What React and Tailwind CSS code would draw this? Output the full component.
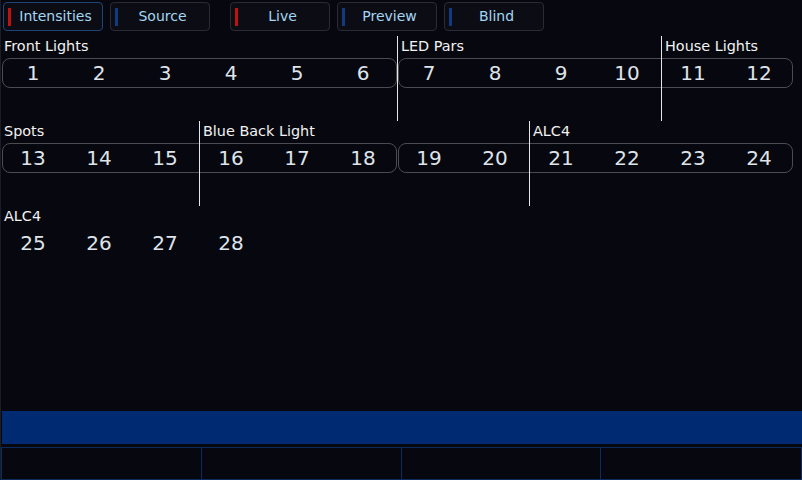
const tabs = [
  { label: 'Intensities', bar: 'bg-[#c01010]', active: true },
  { label: 'Source', bar: 'bg-[#123a80]' },
  { label: 'Live', bar: 'bg-[#c01010]', gap: true },
  { label: 'Preview', bar: 'bg-[#123a80]' },
  { label: 'Blind', bar: 'bg-[#123a80]' },
];

// each row: groups (label, start col, span) and pages (start col, span) with channels
const rows = [
  {
    groups: [
      { name: 'Front Lights', start: 1, span: 6, line: false },
      { name: 'LED Pars', start: 7, span: 4, line: true },
      { name: 'House Lights', start: 11, span: 2, line: true },
    ],
    boxes: [1, 7],
    channels: [1, 2, 3, 4, 5, 6, 7, 8, 9, 10, 11, 12],
  },
  {
    groups: [
      { name: 'Spots', start: 1, span: 3, line: false },
      { name: 'Blue Back Light', start: 4, span: 5, line: true },
      { name: 'ALC4', start: 9, span: 4, line: true },
    ],
    boxes: [1, 7],
    channels: [13, 14, 15, 16, 17, 18, 19, 20, 21, 22, 23, 24],
  },
  {
    groups: [{ name: 'ALC4', start: 1, span: 4, line: false }],
    boxes: [],
    channels: [25, 26, 27, 28],
  },
];

function ChannelRow({ row }) {
  return (
    <div className="grid grid-cols-[repeat(12,66px)] grid-rows-[22px_30px_33px]">
      {row.boxes.map((b) => (
        <div
          key={'b' + b}
          style={{ gridColumn: `${b} / span 6`, gridRow: '2 / 3' }}
          className="ml-[2px] mr-[-1px] rounded-[8px] border border-[#4b4b50]"
        />
      ))}
      {row.channels.map((c, i) => (
        <div
          key={c}
          style={{ gridColumn: `${i + 1} / span 1`, gridRow: '2 / 3' }}
          className="flex items-center justify-center text-[20px] leading-none text-[#dfe3ea]"
        >
          {c}
        </div>
      ))}
      {row.groups.map((g) => (
        <div
          key={g.name + g.start}
          style={{ gridColumn: `${g.start} / span ${g.span}`, gridRow: '1 / 4' }}
          className={`pointer-events-none ${g.line ? 'border-l border-[#e6e6e6] pl-[3px] ml-[1px]' : 'pl-[4px]'}`}
        >
          <div className="text-[14.4px] leading-[20px] text-[#f2f2f2] whitespace-nowrap">{g.name}</div>
        </div>
      ))}
    </div>
  );
}

export default function App() {
  return (
    <div className="w-[802px] h-[480px] bg-[#07080f] shadow-[inset_1px_0_0_#1c1c24] flex flex-col overflow-hidden font-['DejaVu_Sans',sans-serif]">
      {/* Tabs */}
      <div className="h-[36px] flex pt-[2px] pl-[3px]">
        {tabs.map((t) => (
          <div
            key={t.label}
            className={`w-[100px] h-[29px] mr-[7px] ${t.gap ? 'ml-[13px]' : ''} rounded-[4px] border bg-[#0c0d14] flex items-center ${t.active ? 'border-[#1f4477]' : 'border-[#2b2c33]'}`}
          >
            <span className={`ml-[4px] w-[3px] h-[18px] ${t.bar}`} />
            <span className="flex-1 text-center pr-[2px] text-[14px] text-[#a4d6f2]">{t.label}</span>
          </div>
        ))}
      </div>

      {/* Channels */}
      <div className="flex flex-col">
        {rows.map((r, i) => (
          <ChannelRow key={i} row={r} />
        ))}
      </div>

      <div className="flex-1" />

      {/* Command line */}
      <div className="h-[33px] ml-[2px] bg-[#002b73]" />
      <div className="h-[3px]" />
      <div className="h-[33px] ml-[1px] grid grid-cols-4 border border-[#0b2c5c]">
        <div className="border-r border-[#0b2c5c]" />
        <div className="border-r border-[#0b2c5c]" />
        <div className="border-r border-[#0b2c5c]" />
        <div />
      </div>
    </div>
  );
}
